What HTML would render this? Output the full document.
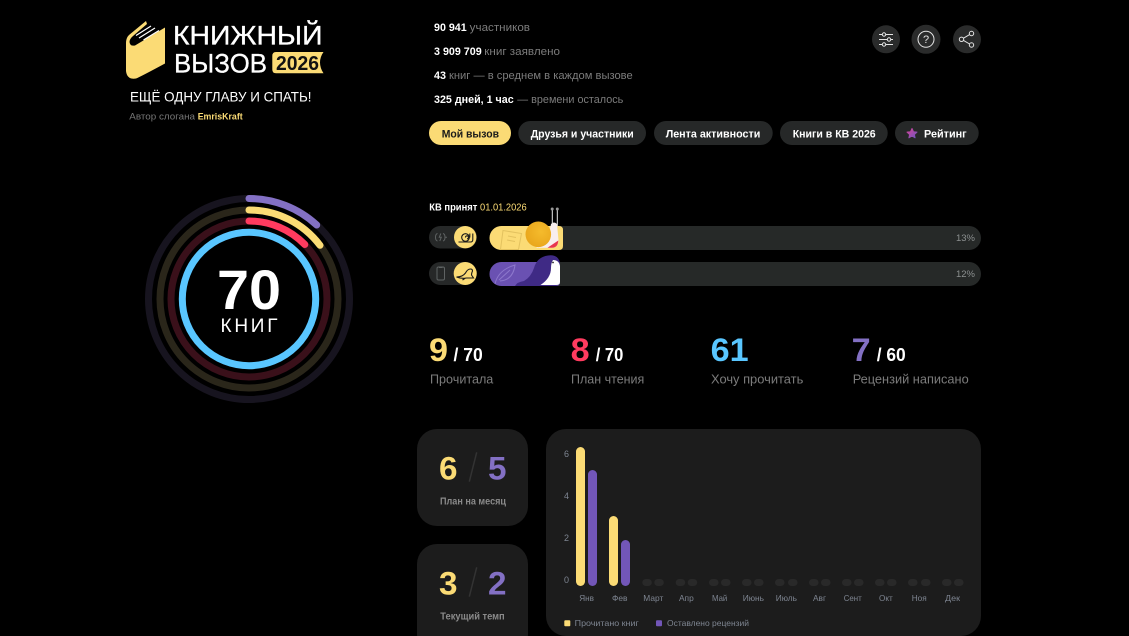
<!DOCTYPE html>
<html lang="ru"><head><meta charset="utf-8"><title>Книжный вызов 2026</title>
<style>
html,body{margin:0;padding:0;background:#000;width:1129px;height:636px;overflow:hidden}
svg{display:block}
text{font-family:"Liberation Sans","Noto Sans CJK SC",sans-serif}
.b{font-weight:700}
.g{fill:#7c7c7c}
.w{fill:#fff}
.m{fill:#7e8591;font-size:8.5px}
</style></head><body>
<svg width="1129" height="636" viewBox="0 0 1129 636" xmlns="http://www.w3.org/2000/svg">
<defs>
<linearGradient id="star" x1="0" y1="0" x2="1" y2="1"><stop offset="0" stop-color="#d8439a"/><stop offset="1" stop-color="#6f55c0"/></linearGradient>
<radialGradient id="shell" cx=".6" cy=".4" r=".7"><stop offset="0" stop-color="#f5bb2c"/><stop offset="1" stop-color="#e8a41a"/></radialGradient>
</defs>

<!-- logo -->
<path fill="#fbdb75" d="M146 21L129 35Q126 38 126 43L126 71Q127 80 136 78.500Q140 77 165 63.500L165 27.500L135 45.500Q130 46.500 129.500 42Q129.500 39 133 36L147 24Z"/>
<g stroke="#fff" stroke-width="1.200" fill="none"><path d="M136 35.500L151 26M139 38L155 28M143.500 40L159 30.500"/></g>
<text x="173" y="44.500" font-size="27" class="w" stroke="#fff" stroke-width=".3" textLength="149.500" lengthAdjust="spacingAndGlyphs">КНИЖНЫЙ</text>
<text x="174" y="72.300" font-size="27" class="w" stroke="#fff" stroke-width=".3" textLength="93" lengthAdjust="spacingAndGlyphs">ВЫЗОВ</text>
<path fill="#fbdb75" d="M276 52H323.500Q320 57 320 62.500Q320 68 323.500 73.300H276Q272.300 73.300 272.300 69.500V56Q272.300 52 276 52Z"/>
<text x="276" y="69.800" font-size="20" class="b" fill="#111" textLength="43" lengthAdjust="spacingAndGlyphs">2026</text>
<text x="130" y="101.700" font-size="14" class="w" textLength="181.500" lengthAdjust="spacingAndGlyphs">ЕЩЁ ОДНУ ГЛАВУ И СПАТЬ!</text>
<text x="129.300" y="119.700" font-size="9.500" fill="#777" textLength="65.700" lengthAdjust="spacingAndGlyphs">Автор слогана</text>
<text x="197.700" y="119.700" font-size="9.500" class="b" fill="#fbdb75" textLength="45" lengthAdjust="spacingAndGlyphs">EmrisKraft</text>

<!-- top stats -->
<g font-size="11">
<text x="434" y="31" class="b w" textLength="32.700" lengthAdjust="spacingAndGlyphs">90 941</text>
<text x="469.700" y="31" class="g" textLength="60.300" lengthAdjust="spacingAndGlyphs">участников</text>
<text x="434" y="55" class="b w" textLength="47.700" lengthAdjust="spacingAndGlyphs">3 909 709</text>
<text x="484.300" y="55" class="g" textLength="75.700" lengthAdjust="spacingAndGlyphs">книг заявлено</text>
<text x="434" y="79" class="b w" textLength="12" lengthAdjust="spacingAndGlyphs">43</text>
<text x="449" y="79" class="g" textLength="183.700" lengthAdjust="spacingAndGlyphs">книг — в среднем в каждом вызове</text>
<text x="434" y="103" class="b w" textLength="79.700" lengthAdjust="spacingAndGlyphs">325 дней, 1 час</text>
<text x="517.300" y="103" class="g" textLength="106" lengthAdjust="spacingAndGlyphs">— времени осталось</text>
</g>

<!-- circle buttons -->
<circle cx="886" cy="39.300" r="14" fill="#2a2b2b"/>
<circle cx="926" cy="39.300" r="14.500" fill="#2a2b2b"/>
<circle cx="967" cy="39.300" r="14" fill="#2a2b2b"/>
<g fill="none" stroke="#e4e4e4" stroke-width="1">
<path d="M879 34.500H882.500M885.500 34.500H893M879 39.500H887.500M890.500 39.500H893M879 44.500H882.500M885.500 44.500H893"/>
<circle cx="884" cy="34.500" r="1.700"/><circle cx="889" cy="39.500" r="1.700"/><circle cx="884" cy="44.500" r="1.700"/>
<circle cx="926" cy="39.300" r="8"/>
<circle cx="961.500" cy="39.300" r="2.200"/><circle cx="971.500" cy="33.500" r="2.200"/><circle cx="971.500" cy="45" r="2.200"/>
<path d="M963.500 38.200L969.600 34.600M963.500 40.400L969.600 44"/>
</g>
<text x="926" y="43" font-size="11" fill="#e4e4e4" text-anchor="middle">?</text>

<!-- nav -->
<rect x="429" y="121" width="82" height="24" rx="12" fill="#fbdb75"/>
<rect x="518.300" y="121" width="127.700" height="24" rx="12" fill="#262828"/>
<rect x="654" y="121" width="118.700" height="24" rx="12" fill="#262828"/>
<rect x="780" y="121" width="107.700" height="24" rx="12" fill="#262828"/>
<rect x="895" y="121" width="83.700" height="24" rx="12" fill="#262828"/>
<g font-size="11" class="b">
<text x="441.700" y="137.500" font-weight="700" fill="#1a1a1a" textLength="57.300" lengthAdjust="spacingAndGlyphs">Мой вызов</text>
<text x="530.700" y="137.500" font-weight="700" class="w" textLength="103" lengthAdjust="spacingAndGlyphs">Друзья и участники</text>
<text x="665.700" y="137.500" font-weight="700" class="w" textLength="94.600" lengthAdjust="spacingAndGlyphs">Лента активности</text>
<text x="792.700" y="137.500" font-weight="700" class="w" textLength="83" lengthAdjust="spacingAndGlyphs">Книги в КВ 2026</text>
<text x="924" y="137.500" font-weight="700" class="w" textLength="42.700" lengthAdjust="spacingAndGlyphs">Рейтинг</text>
</g>
<path fill="url(#star)" stroke="url(#star)" stroke-width="1" stroke-linejoin="round" d="M912 128.500L913.500 131.700L917 132.100L914.400 134.500L915.100 137.800L912 136L908.900 137.800L909.600 134.500L907 132.100L910.500 131.700Z"/>

<!-- rings -->
<g fill="none" stroke-width="7">
<circle cx="249" cy="299" r="100.500" stroke="#17141f"/>
<circle cx="249" cy="299" r="89" stroke="#2a261a"/>
<circle cx="249" cy="299" r="78" stroke="#3a101a"/>
<circle cx="249" cy="299" r="66.700" stroke="#59c6ff"/>
<g stroke-linecap="round">
<path stroke="#8370c4" d="M249 198.500A100.500 100.500 0 0 1 316.700 225"/>
<path stroke="#fbdb75" d="M249 210A89 89 0 0 1 320 245.300"/>
<path stroke="#ff3b5f" d="M249 221A78 78 0 0 1 304.800 244.500"/>
</g>
</g>
<text x="217" y="309" font-size="56" class="b w" textLength="64" lengthAdjust="spacingAndGlyphs">70</text>
<text x="220.500" y="332" font-size="19" class="w" textLength="57" lengthAdjust="spacing">КНИГ</text>

<!-- challenge accepted -->
<text x="429.300" y="210.700" font-size="10" font-weight="700" class="w" textLength="48" lengthAdjust="spacingAndGlyphs">КВ принят</text>
<text x="480" y="210.700" font-size="10" fill="#fbdb75" textLength="46.700" lengthAdjust="spacingAndGlyphs">01.01.2026</text>

<!-- left pills -->
<rect x="429" y="226" width="48" height="22.500" rx="11.250" fill="#262828"/>
<rect x="429" y="262" width="48" height="23" rx="11.500" fill="#262828"/>
<circle cx="465.200" cy="237.200" r="11.200" fill="#fbdb75"/>
<circle cx="465.200" cy="273.500" r="11.500" fill="#fbdb75"/>
<g fill="none" stroke="#5f6363" stroke-width="1">
<path d="M437.500 233.500Q435.500 234 435.500 237.200Q435.500 240.500 437.500 241M443 233.500Q445 234 445 237.200Q445 240.500 443 241M440.800 233.500L439.300 237.200H441.300L439.800 241M445.500 237.200H447"/>
<rect x="437" y="267" width="7.500" height="13" rx="1.500"/><path d="M439 267.500H442.500"/>
</g>
<g fill="none" stroke="#1a1a1a" stroke-width="1.100">
<circle cx="465.500" cy="237.500" r="3.800"/><path d="M465.500 237.500a1.500 1.500 0 1 1 1.500 1.300M458.500 242H470.500Q472.800 242 472.800 239.500V233.500M469.800 233.500V237.500"/>
<path d="M456.500 277Q462.500 277 465.500 273Q467.500 269 470.500 269Q472.500 269 472.500 271Q471.500 273 471.500 275L473.500 278H466.500Q461.500 279 456.500 277ZM465.500 278L462.500 280"/>
</g>

<!-- tracks -->
<rect x="489.500" y="226" width="491.500" height="24" rx="12" fill="#262928"/>
<rect x="489.500" y="262" width="491.500" height="24" rx="12" fill="#262928"/>
<path fill="#fbdb75" d="M501.500 226H559Q563 226 563 230V246Q563 250 559 250H501.500A12 12 0 0 1 501.500 226Z"/>
<path fill="#6a51b2" d="M501.500 262H556Q560 262 560 266V282Q560 286 556 286H501.500A12 12 0 0 1 501.500 262Z"/>
<!-- book sketch -->
<g fill="none" stroke="#e3c25f" stroke-width="1"><path d="M503 230.500L521.500 233.500L518.500 249.500H500.500Z"/><path d="M508 236L516 237.500M507 240L515 241.500"/></g>
<g fill="none" stroke="#8d78cc" stroke-width="1"><path d="M495 284Q498 270 515 265Q513 280 500 281M499 280L510 270"/></g>
<!-- snail -->
<path fill="#f8eeee" d="M551 224Q554 221 557 224L558.500 240Q558 247.500 552 247.800H536Q548 242 551 224Z"/>
<path fill="#e8344e" d="M547.500 247.800L558.300 240.500Q558 247.500 552 247.800Z"/>
<path stroke="#e8e8e8" stroke-width="1" fill="none" d="M552.300 210V225M557.300 210V226"/>
<circle cx="552.200" cy="209" r="1.500" fill="#999"/><circle cx="557.300" cy="209" r="1.500" fill="#999"/>
<circle cx="538.300" cy="234.300" r="12.800" fill="url(#shell)"/>
<!-- seal -->
<path fill="#3f2a85" d="M515 286Q517 282 524 281Q531 277 534 268Q537 257 548 255.500Q558 254 560 263V280Q560 285 556 286Z"/>
<path fill="#fff" d="M553 260Q559 260 560 266V282Q560 285 556 285H540.500Q551 278 551 268Q551 263 553 260Z"/>
<circle cx="553" cy="262.500" r=".9" fill="#222"/>

<text x="956" y="241" font-size="9" fill="#8c9090" textLength="19" lengthAdjust="spacingAndGlyphs">13%</text>
<text x="956" y="277" font-size="9" fill="#8c9090" textLength="19" lengthAdjust="spacingAndGlyphs">12%</text>

<!-- counters -->
<g font-size="32" class="b">
<text x="429" y="361" font-weight="700" fill="#fbdb75" textLength="19" lengthAdjust="spacingAndGlyphs">9</text>
<text x="570.700" y="361" font-weight="700" fill="#ff3b5f" textLength="19" lengthAdjust="spacingAndGlyphs">8</text>
<text x="710.700" y="361" font-weight="700" fill="#59c6ff" textLength="38" lengthAdjust="spacingAndGlyphs">61</text>
<text x="851.700" y="361" font-weight="700" fill="#8370c4" textLength="19" lengthAdjust="spacingAndGlyphs">7</text>
</g>
<g font-size="18">
<text x="453.500" y="361" font-weight="700" class="w" textLength="29.200" lengthAdjust="spacingAndGlyphs">/ 70</text>
<text x="595.700" y="361" font-weight="700" class="w" textLength="27.600" lengthAdjust="spacingAndGlyphs">/ 70</text>
<text x="876.700" y="361" font-weight="700" class="w" textLength="29" lengthAdjust="spacingAndGlyphs">/ 60</text>
</g>
<g font-size="13" class="g">
<text x="430" y="383.300" textLength="63.300" lengthAdjust="spacingAndGlyphs">Прочитала</text>
<text x="571" y="383.300" textLength="73.300" lengthAdjust="spacingAndGlyphs">План чтения</text>
<text x="711" y="383.300" textLength="92.300" lengthAdjust="spacingAndGlyphs">Хочу прочитать</text>
<text x="852.700" y="383.300" textLength="116" lengthAdjust="spacingAndGlyphs">Рецензий написано</text>
</g>

<!-- cards -->
<rect x="417" y="429" width="111" height="97" rx="20" fill="#1c1c1c"/>
<rect x="417" y="544" width="111" height="110" rx="20" fill="#1c1c1c"/>
<rect x="546" y="429" width="435" height="207" rx="20" fill="#1c1c1c"/>
<g font-size="32">
<text x="439" y="479.300" font-weight="700" fill="#fbdb75" textLength="18.500" lengthAdjust="spacingAndGlyphs">6</text>
<text x="488" y="479.300" font-weight="700" fill="#8370c4" textLength="18.500" lengthAdjust="spacingAndGlyphs">5</text>
<text x="439" y="594.300" font-weight="700" fill="#fbdb75" textLength="18.500" lengthAdjust="spacingAndGlyphs">3</text>
<text x="488" y="594.300" font-weight="700" fill="#8370c4" textLength="18.500" lengthAdjust="spacingAndGlyphs">2</text>
</g>
<path stroke="#333" stroke-width="1.500" d="M476.700 452.300L469.300 481.700M476.700 567.300L469.300 596.700"/>
<text x="440" y="504.700" font-size="10" font-weight="700" fill="#8a8a8a" textLength="66" lengthAdjust="spacingAndGlyphs">План на месяц</text>
<text x="440.300" y="619.700" font-size="10" font-weight="700" fill="#8a8a8a" textLength="64.400" lengthAdjust="spacingAndGlyphs">Текущий темп</text>

<!-- chart -->
<g font-size="9" fill="#7e8591">
<text x="564" y="457">6</text><text x="564" y="499">4</text><text x="564" y="541">2</text><text x="564" y="583">0</text>
</g>
<rect x="576" y="447" width="9" height="139" rx="4.500" fill="#fbdb75"/>
<rect x="588" y="470" width="9" height="116" rx="4.500" fill="#7256b8"/>
<rect x="609" y="516" width="9" height="70" rx="4.500" fill="#fbdb75"/>
<rect x="621" y="540" width="9" height="46" rx="4.500" fill="#7256b8"/>
<g fill="#292929">
<rect x="642.300" y="579" width="9.500" height="7" rx="3.500"/><rect x="654.300" y="579" width="9.500" height="7" rx="3.500"/>
<rect x="675.700" y="579" width="9.500" height="7" rx="3.500"/><rect x="687.700" y="579" width="9.500" height="7" rx="3.500"/>
<rect x="709" y="579" width="9.500" height="7" rx="3.500"/><rect x="721" y="579" width="9.500" height="7" rx="3.500"/>
<rect x="742" y="579" width="9.500" height="7" rx="3.500"/><rect x="754" y="579" width="9.500" height="7" rx="3.500"/>
<rect x="775" y="579" width="9.500" height="7" rx="3.500"/><rect x="788" y="579" width="9.500" height="7" rx="3.500"/>
<rect x="809" y="579" width="9.500" height="7" rx="3.500"/><rect x="821" y="579" width="9.500" height="7" rx="3.500"/>
<rect x="842" y="579" width="9.500" height="7" rx="3.500"/><rect x="854" y="579" width="9.500" height="7" rx="3.500"/>
<rect x="875" y="579" width="9.500" height="7" rx="3.500"/><rect x="887" y="579" width="9.500" height="7" rx="3.500"/>
<rect x="908" y="579" width="9.500" height="7" rx="3.500"/><rect x="921" y="579" width="9.500" height="7" rx="3.500"/>
<rect x="942" y="579" width="9.500" height="7" rx="3.500"/><rect x="954" y="579" width="9.500" height="7" rx="3.500"/>
</g>
<g class="m">
<text x="579.300" y="601" textLength="14.700" lengthAdjust="spacingAndGlyphs">Янв</text>
<text x="612" y="601" textLength="15.500" lengthAdjust="spacingAndGlyphs">Фев</text>
<text x="643.300" y="601" textLength="20" lengthAdjust="spacingAndGlyphs">Март</text>
<text x="679" y="601" textLength="14.700" lengthAdjust="spacingAndGlyphs">Апр</text>
<text x="712" y="601" textLength="15.300" lengthAdjust="spacingAndGlyphs">Май</text>
<text x="742.700" y="601" textLength="21.300" lengthAdjust="spacingAndGlyphs">Июнь</text>
<text x="775.700" y="601" textLength="21.300" lengthAdjust="spacingAndGlyphs">Июль</text>
<text x="813" y="601" textLength="13" lengthAdjust="spacingAndGlyphs">Авг</text>
<text x="843.700" y="601" textLength="18" lengthAdjust="spacingAndGlyphs">Сент</text>
<text x="879" y="601" textLength="13.700" lengthAdjust="spacingAndGlyphs">Окт</text>
<text x="911.700" y="601" textLength="15" lengthAdjust="spacingAndGlyphs">Ноя</text>
<text x="945" y="601" textLength="15" lengthAdjust="spacingAndGlyphs">Дек</text>
</g>
<rect x="564.300" y="620.300" width="6" height="6" rx="1" fill="#fbdb75"/>
<rect x="656" y="620.300" width="6" height="6" rx="1" fill="#7256b8"/>
<text x="574.700" y="626" class="m" textLength="64" lengthAdjust="spacingAndGlyphs">Прочитано книг</text>
<text x="667" y="626" class="m" textLength="82" lengthAdjust="spacingAndGlyphs">Оставлено рецензий</text>
</svg>
</body></html>
